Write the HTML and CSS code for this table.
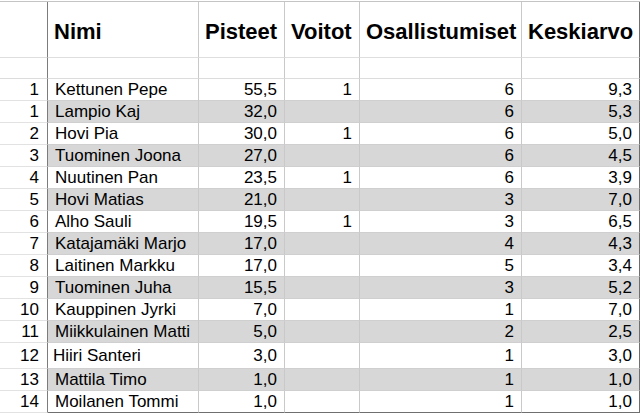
FILE: index.html
```html
<!DOCTYPE html>
<html lang="fi">
<head>
<meta charset="utf-8">
<title>Pisteet</title>
<link rel="stylesheet" href="styles.css">
</head>
<body>
<div class="sheet">
  <div class="row head">
    <div class="c num"></div>
    <div class="c">Nimi</div>
    <div class="c">Pisteet</div>
    <div class="c">Voitot</div>
    <div class="c">Osallistumiset</div>
    <div class="c">Keskiarvo</div>
  </div>
  <div class="row blank">
    <div class="c num"></div><div class="c"></div><div class="c"></div><div class="c"></div><div class="c"></div><div class="c"></div>
  </div>
  <div class="row"><div class="c num">1</div><div class="c">Kettunen Pepe</div><div class="c r">55,5</div><div class="c r">1</div><div class="c r">6</div><div class="c r">9,3</div></div>
  <div class="row alt"><div class="c num">1</div><div class="c">Lampio Kaj</div><div class="c r">32,0</div><div class="c r"></div><div class="c r">6</div><div class="c r">5,3</div></div>
  <div class="row"><div class="c num">2</div><div class="c">Hovi Pia</div><div class="c r">30,0</div><div class="c r">1</div><div class="c r">6</div><div class="c r">5,0</div></div>
  <div class="row alt"><div class="c num">3</div><div class="c">Tuominen Joona</div><div class="c r">27,0</div><div class="c r"></div><div class="c r">6</div><div class="c r">4,5</div></div>
  <div class="row"><div class="c num">4</div><div class="c">Nuutinen Pan</div><div class="c r">23,5</div><div class="c r">1</div><div class="c r">6</div><div class="c r">3,9</div></div>
  <div class="row alt"><div class="c num">5</div><div class="c">Hovi Matias</div><div class="c r">21,0</div><div class="c r"></div><div class="c r">3</div><div class="c r">7,0</div></div>
  <div class="row"><div class="c num">6</div><div class="c">Alho Sauli</div><div class="c r">19,5</div><div class="c r">1</div><div class="c r">3</div><div class="c r">6,5</div></div>
  <div class="row alt"><div class="c num">7</div><div class="c">Katajamäki Marjo</div><div class="c r">17,0</div><div class="c r"></div><div class="c r">4</div><div class="c r">4,3</div></div>
  <div class="row"><div class="c num">8</div><div class="c">Laitinen Markku</div><div class="c r">17,0</div><div class="c r"></div><div class="c r">5</div><div class="c r">3,4</div></div>
  <div class="row alt"><div class="c num">9</div><div class="c">Tuominen Juha</div><div class="c r">15,5</div><div class="c r"></div><div class="c r">3</div><div class="c r">5,2</div></div>
  <div class="row"><div class="c num">10</div><div class="c">Kauppinen Jyrki</div><div class="c r">7,0</div><div class="c r"></div><div class="c r">1</div><div class="c r">7,0</div></div>
  <div class="row alt"><div class="c num">11</div><div class="c">Miikkulainen Matti</div><div class="c r">5,0</div><div class="c r"></div><div class="c r">2</div><div class="c r">2,5</div></div>
  <div class="row tall"><div class="c num">12</div><div class="c shift">Hiiri Santeri</div><div class="c r">3,0</div><div class="c r"></div><div class="c r">1</div><div class="c r">3,0</div></div>
  <div class="row alt"><div class="c num">13</div><div class="c">Mattila Timo</div><div class="c r">1,0</div><div class="c r"></div><div class="c r">1</div><div class="c r">1,0</div></div>
  <div class="row last"><div class="c num">14</div><div class="c">Moilanen Tommi</div><div class="c r">1,0</div><div class="c r"></div><div class="c r">1</div><div class="c r">1,0</div></div>
</div>
</body>
</html>
```

FILE: styles.css
```css
html, body {
  margin: 0;
  padding: 0;
  background: #ffffff;
}

body {
  font-family: "Liberation Sans", Arial, sans-serif;
  color: #000;
  padding-top: 1px;
}

.sheet {
  width: 640px;
  border-top: 1px solid #c4c4c4;
}

.row {
  display: grid;
  grid-template-columns: 48px 151px 86px 75px 162px 118px;
  height: 22px;
  font-size: 17px;
}

.c {
  box-sizing: border-box;
  display: flex;
  align-items: center;
  padding: 0 7px;
  border-right: 1px solid #c9c9c9;
  border-bottom: 1px solid #cfcfcf;
  white-space: nowrap;
  overflow: hidden;
}

.c:last-child {
  border-right-color: #6f6f6f;
}

.c.num {
  justify-content: flex-end;
  padding-right: 8px;
  border-right-color: #7c7c7c;
  border-bottom-color: #e2e2e2;
  background: #fff;
}

.c.r {
  justify-content: flex-end;
}

.alt .c {
  background: #d7d7d7;
}

.alt .c.num {
  background: #fff;
}

.head {
  height: 56px;
  font-size: 22px;
  font-weight: bold;
}

.head .c {
  padding-top: 5px;
  padding-left: 6px;
  border-bottom-color: #dedede;
}

.blank {
  height: 21px;
}

.blank .c {
  border-bottom-color: #dcdcdc;
}

.tall {
  height: 26px;
}

.shift {
  padding-left: 5px;
}

.last .c {
  border-bottom-color: #6f6f6f;
}

.last .c.num {
  border-bottom-color: #e2e2e2;
}
```
